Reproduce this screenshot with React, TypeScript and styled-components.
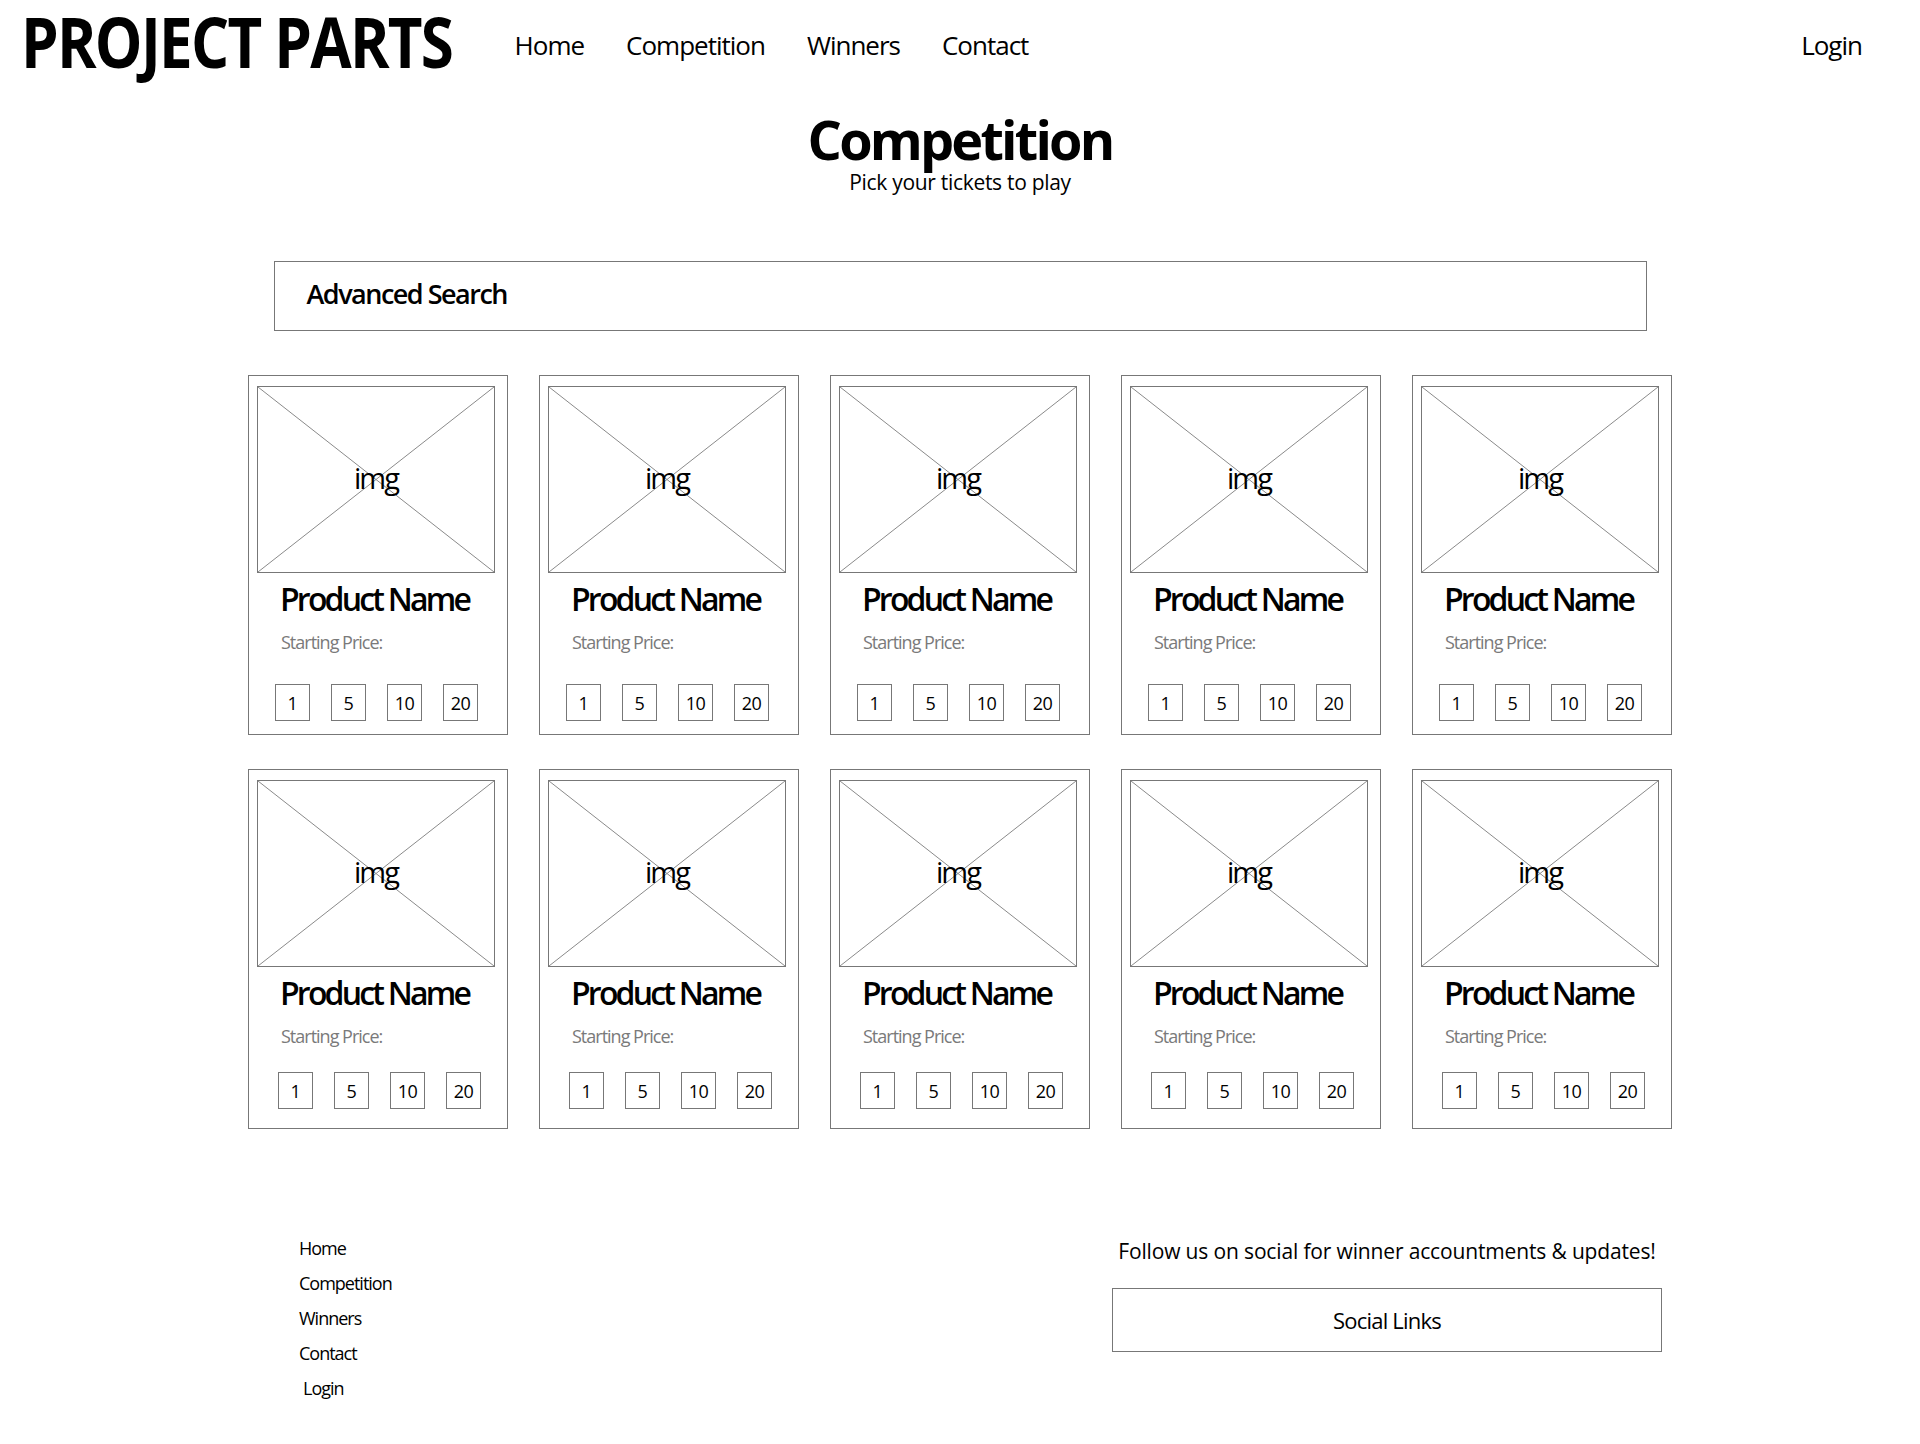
import React from "react";
import styled, { createGlobalStyle } from "styled-components";

const GlobalStyle = createGlobalStyle`
  html, body {
    margin: 0;
    padding: 0;
    background: #ffffff;
  }
  body {
    font-family: "Open Sans", "Liberation Sans", sans-serif;
    color: #000000;
  }
  * { box-sizing: border-box; }
`;

const Page = styled.div`
  width: 1920px;
  min-height: 1444px;
  display: flex;
  flex-direction: column;
  align-items: center;
`;

const Header = styled.header`
  width: 100%;
  height: 77px;
  display: flex;
  align-items: flex-start;
  padding: 0 58px 0 21px;
`;

const Logo = styled.div`
  margin-top: 7px;
  margin-right: -64px;
  width: max-content;
  font-size: 69px;
  line-height: 1;
  font-weight: 700;
  letter-spacing: -2px;
  white-space: nowrap;
  transform: scaleX(0.87);
  transform-origin: left center;
  flex-shrink: 0;
`;

const Nav = styled.nav`
  margin-top: 32px;
  margin-left: 62px;
  display: flex;
  gap: 42px;
  flex: 1;
`;

const NavLink = styled.a<{ $push?: boolean }>`
  font-size: 26px;
  line-height: 1;
  letter-spacing: -1px;
  color: #000;
  text-decoration: none;
  white-space: nowrap;
  margin-left: ${(p) => (p.$push ? "auto" : "0")};
`;

const TitleBlock = styled.section`
  margin-top: 35px;
  display: flex;
  flex-direction: column;
  align-items: center;
`;

const Title = styled.h1`
  margin: 0;
  font-size: 54px;
  line-height: 1;
  font-weight: 700;
  letter-spacing: -2.8px;
`;

const Subtitle = styled.p`
  margin: 6px 0 0;
  font-size: 21px;
  line-height: 1;
  letter-spacing: -0.3px;
`;

const SearchBar = styled.div`
  margin-top: 68px;
  width: 1373px;
  height: 70px;
  border: 1px solid #777;
  display: flex;
  align-items: center;
  padding: 0 0 6px 32px;
  font-size: 27px;
  font-weight: 600;
  letter-spacing: -1.5px;
`;

const Grid = styled.div`
  margin-top: 44px;
  display: grid;
  grid-template-columns: repeat(5, 260px);
  column-gap: 31px;
  row-gap: 34px;
`;

const Card = styled.div`
  width: 260px;
  height: 360px;
  border: 1px solid #777;
  padding: 10px 13px 0 8px;
  display: flex;
  flex-direction: column;
`;

const ImageBox = styled.div`
  position: relative;
  width: 238px;
  height: 187px;
  border: 1px solid #777;
  display: flex;
  align-items: center;
  justify-content: center;
`;

const Cross = styled.svg`
  position: absolute;
  inset: 0;
  width: 100%;
  height: 100%;
`;

const ImgLabel = styled.span`
  position: relative;
  font-size: 29px;
  line-height: 1;
  letter-spacing: -2px;
  margin-top: -4px;
`;

const ProductName = styled.div`
  margin: 10px 0 0 23px;
  font-size: 32px;
  line-height: 1;
  font-weight: 600;
  letter-spacing: -2.8px;
  white-space: nowrap;
`;

const Price = styled.div`
  margin: 18px 0 0 24px;
  font-size: 18px;
  line-height: 1;
  color: #7a7a7a;
  letter-spacing: -1px;
`;

const Tickets = styled.div<{ $lower?: boolean }>`
  margin: ${(p) => (p.$lower ? "27px 0 0 21px" : "33px 0 0 18px")};
  display: flex;
  gap: 21px;
`;

const Ticket = styled.button`
  width: 35px;
  height: 37px;
  padding: 0;
  border: 1px solid #777;
  background: #fff;
  font-family: "Open Sans", "Liberation Sans", sans-serif;
  font-size: 18px;
  color: #000;
  display: flex;
  align-items: center;
  justify-content: center;
  letter-spacing: -0.5px;
`;

const Footer = styled.footer`
  margin-top: 102px;
  width: 1424px;
  display: flex;
  justify-content: space-between;
  padding: 0 10px 0 51px;
`;

const FooterLinks = styled.nav`
  display: flex;
  flex-direction: column;
`;

const FooterLink = styled.a<{ $indent?: boolean }>`
  font-size: 18px;
  line-height: 35px;
  letter-spacing: -1px;
  color: #000;
  text-decoration: none;
  padding-left: ${(p) => (p.$indent ? "4px" : "0")};
`;

const Social = styled.div`
  width: 550px;
  padding-top: 10px;
  display: flex;
  flex-direction: column;
  align-items: center;
`;

const SocialText = styled.p`
  margin: 0;
  font-size: 21px;
  line-height: 1;
  letter-spacing: -0.15px;
  white-space: nowrap;
`;

const SocialBox = styled.div`
  margin-top: 26px;
  width: 550px;
  height: 64px;
  border: 1px solid #777;
  display: flex;
  align-items: center;
  justify-content: center;
  font-size: 22px;
  letter-spacing: -0.8px;
`;

const navItems = ["Home", "Competition", "Winners", "Contact"];
const tickets = ["1", "5", "10", "20"];

function ProductCard({ lower }: { lower?: boolean }) {
  return (
    <Card>
      <ImageBox>
        <Cross viewBox="0 0 100 100" preserveAspectRatio="none">
          <line x1="0" y1="0" x2="100" y2="100" stroke="#8a8a8a" strokeWidth="1" vectorEffect="non-scaling-stroke" />
          <line x1="100" y1="0" x2="0" y2="100" stroke="#8a8a8a" strokeWidth="1" vectorEffect="non-scaling-stroke" />
        </Cross>
        <ImgLabel>img</ImgLabel>
      </ImageBox>
      <ProductName>Product Name</ProductName>
      <Price>Starting Price:</Price>
      <Tickets $lower={lower}>
        {tickets.map((t) => (
          <Ticket key={t}>{t}</Ticket>
        ))}
      </Tickets>
    </Card>
  );
}

export default function App() {
  return (
    <Page>
      <GlobalStyle />
      <Header>
        <Logo>PROJECT PARTS</Logo>
        <Nav>
          {navItems.map((n) => (
            <NavLink key={n} href="#">{n}</NavLink>
          ))}
          <NavLink href="#" $push>Login</NavLink>
        </Nav>
      </Header>
      <TitleBlock>
        <Title>Competition</Title>
        <Subtitle>Pick your tickets to play</Subtitle>
      </TitleBlock>
      <SearchBar>Advanced Search</SearchBar>
      <Grid>
        {Array.from({ length: 10 }).map((_, i) => (
          <ProductCard key={i} lower={i >= 5} />
        ))}
      </Grid>
      <Footer>
        <FooterLinks>
          {navItems.map((n) => (
            <FooterLink key={n} href="#">{n}</FooterLink>
          ))}
          <FooterLink href="#" $indent>Login</FooterLink>
        </FooterLinks>
        <Social>
          <SocialText>Follow us on social for winner accountments &amp; updates!</SocialText>
          <SocialBox>Social Links</SocialBox>
        </Social>
      </Footer>
    </Page>
  );
}
